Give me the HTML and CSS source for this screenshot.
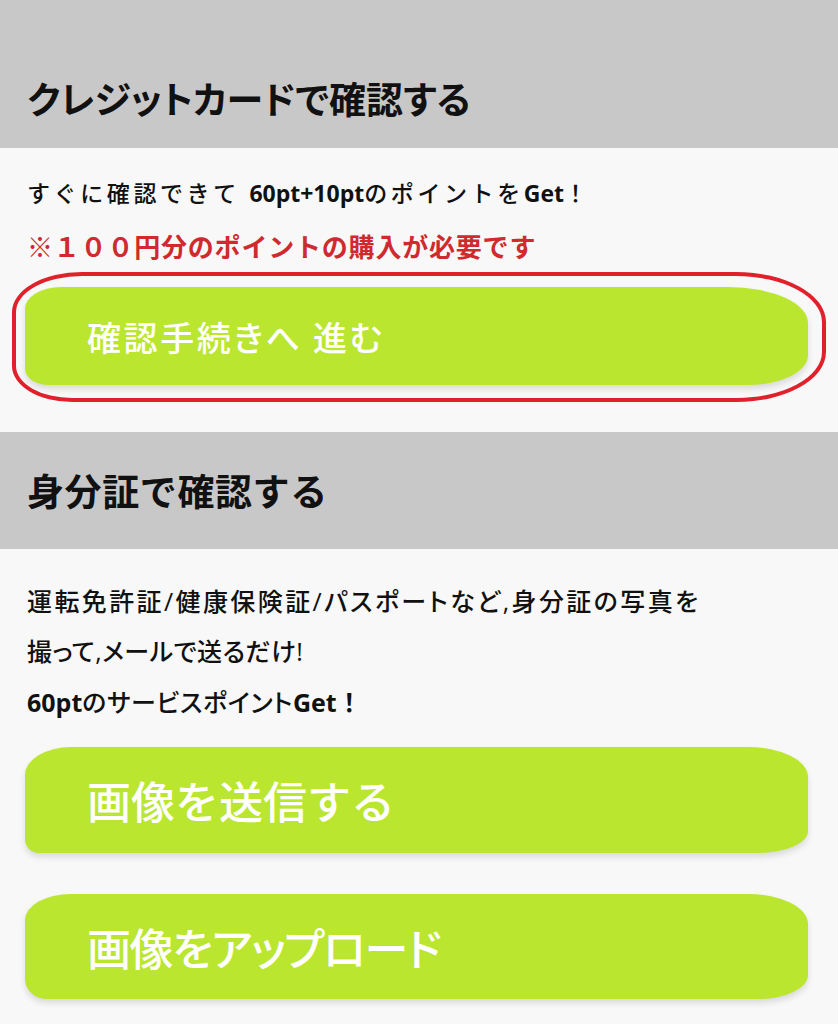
FILE: index.html
```html
<!DOCTYPE html>
<html lang="ja">
<head>
<meta charset="utf-8">
<title>確認</title>
<link rel="stylesheet" href="styles.css">
</head>
<body>
<div class="page">
  <section class="block">
    <h2 class="head head-first"><span class="head-text head-text-card">クレジットカードで確認する</span></h2>
    <div class="body body-first">
      <p class="line lead">すぐに確認できて <b class="latin">60pt+10pt</b>のポイントを<b class="latin">Get</b>！</p>
      <p class="line note">※１００円分のポイントの購入が必要です</p>
      <div class="highlight">
        <a class="btn btn-proceed" href="#">確認手続きへ 進む</a>
      </div>
    </div>
  </section>
  <section class="block">
    <h2 class="head"><span class="head-text head-text-id">身分証で確認する</span></h2>
    <div class="body body-second">
      <p class="line desc">運転免許証/健康保険証/パスポートなど,身分証の写真を</p>
      <p class="line desc desc-tight">撮って,メールで送るだけ!</p>
      <p class="line desc desc-points"><b class="latin">60pt</b>のサービスポイント<b class="latin">Get</b><span class="bang">！</span></p>
      <div class="actions">
        <a class="btn btn-large btn-send" href="#">画像を送信する</a>
        <a class="btn btn-large btn-upload" href="#">画像をアップロード</a>
      </div>
    </div>
  </section>
</div>
</body>
</html>
```
FILE: styles.css
```css
* { box-sizing: border-box; }
html, body {
  margin: 0;
  padding: 0;
  background: #f8f8f8;
}
body {
  font-family: "Open Sans", "Noto Sans CJK JP", sans-serif;
  color: #111;
  width: 838px;
  height: 1024px;
  overflow: hidden;
}
.page { display: flex; flex-direction: column; }

.head {
  margin: 0;
  height: 117px;
  background: #c8c8c8;
  display: flex;
  align-items: center;
  padding: 0 0 0 27px;
  font-family: "Noto Sans CJK JP", sans-serif;
  font-weight: 700;
  font-size: 37px;
  line-height: 1;
  color: #111;
}
.head-first {
  height: 148px;
  padding-top: 48px;
}
.head-text-card { font-feature-settings: "palt"; letter-spacing: 0; }
.head-text-id { letter-spacing: 0.6px; }

.body { padding: 0 27px; }
.body-first { padding-top: 30px; padding-bottom: 30px; }
.body-second { padding-top: 27px; padding-bottom: 0; }

.line {
  margin: 0;
  white-space: nowrap;
}
.latin {
  font-family: "Open Sans", sans-serif;
  font-weight: 700;
  letter-spacing: 0;
}
.lead {
  font-size: 23px;
  line-height: 30px;
  font-weight: 500;
  letter-spacing: 3.6px;
}
.note {
  margin-top: 24px;
  font-size: 26px;
  line-height: 30px;
  font-weight: 700;
  color: #cf2a2e;
  letter-spacing: 0.8px;
}
.desc {
  font-size: 25px;
  line-height: 50px;
  font-weight: 500;
  letter-spacing: 2.4px;
  font-feature-settings: "palt";
}
.desc-tight { letter-spacing: 0.5px; }
.desc-points { letter-spacing: 0.6px; }
.bang {
  font-family: "Noto Sans CJK JP", sans-serif;
  font-weight: 700;
  font-feature-settings: normal;
}

.highlight {
  margin: 10px -15px 0 -15px;
  border: 4px solid #e0212b;
  border-radius: 70px 90px 90px 60px / 40px 50px 50px 36px;
  padding: 11px 14px 13px 9px;
}

.btn {
  display: flex;
  align-items: center;
  background: #bae62f;
  color: #fff;
  text-decoration: none;
  font-family: "Noto Sans CJK JP", sans-serif;
  padding-left: 62px;
  box-shadow: 0 4px 6px rgba(0, 0, 0, 0.12);
}
.btn-proceed {
  height: 98px;
  font-size: 34px;
  font-weight: 500;
  letter-spacing: 2.6px;
  font-feature-settings: "palt";
  border-radius: 36px 80px 60px 24px / 22px 36px 30px 16px;
}
.actions {
  display: flex;
  flex-direction: column;
  gap: 41px;
  margin: 20px 3px 0 -2px;
}
.btn-large {
  font-size: 44px;
  font-weight: 500;
}
.btn-send {
  height: 106px;
  border-radius: 46px 60px 50px 14px / 28px 30px 22px 14px;
}
.btn-upload {
  height: 105px;
  font-feature-settings: "palt";
  letter-spacing: -1.4px;
  border-radius: 46px 60px 50px 22px / 26px 30px 24px 20px;
}
```
